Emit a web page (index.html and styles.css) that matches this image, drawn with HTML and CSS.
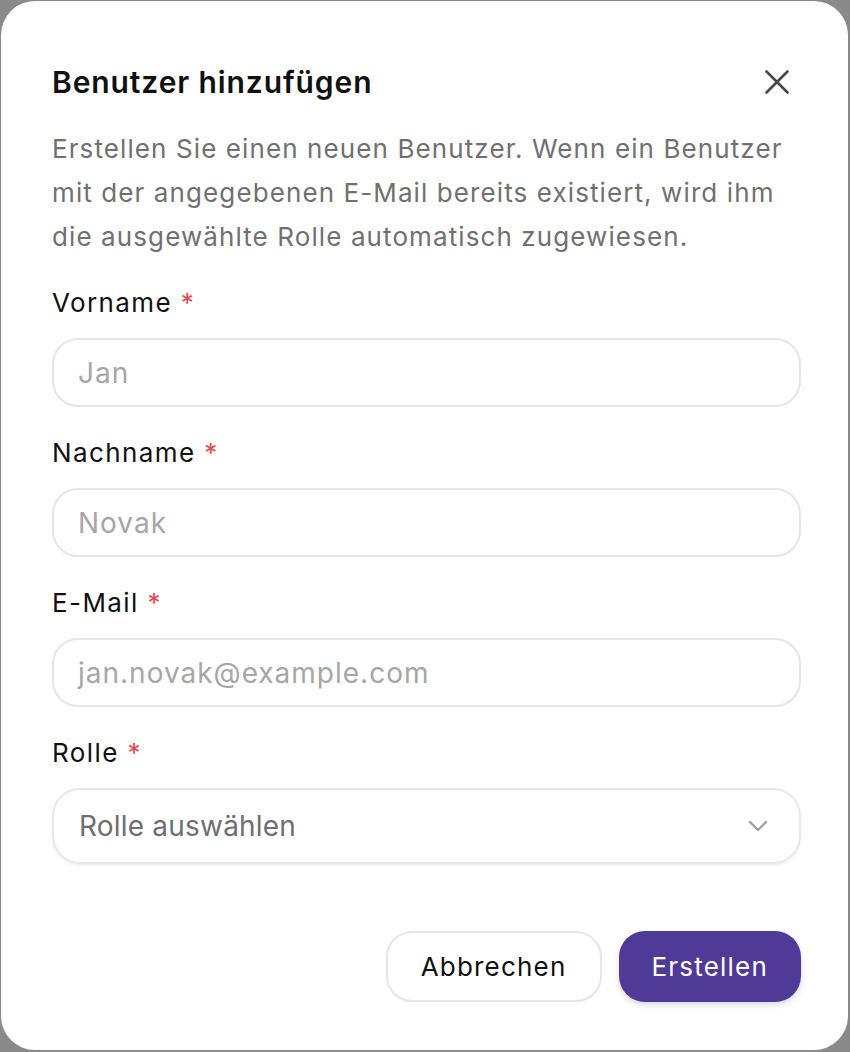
FILE: index.html
```html
<!DOCTYPE html>
<html lang="de">
<head>
<meta charset="utf-8">
<title>Benutzer hinzufügen</title>
<link rel="stylesheet" href="styles.css">
</head>
<body>
<div class="dialog">
  <div class="header">
    <h2 class="title">Benutzer hinzufügen</h2>
    <button class="close" aria-label="Schließen">
      <svg width="24" height="24" viewBox="0 0 24 24" fill="none" stroke="#474747" stroke-width="2.6" stroke-linecap="round"><path d="M1.5 1.5L22.5 22.5M22.5 1.5L1.5 22.5"/></svg>
    </button>
  </div>
  <p class="desc">Erstellen Sie einen neuen Benutzer. Wenn ein Benutzer mit der angegebenen E-Mail bereits existiert, wird ihm die ausgewählte Rolle automatisch zugewiesen.</p>
  <div class="fields">
    <div class="field">
      <label class="label">Vorname <span class="req">*</span></label>
      <div class="input"><span class="ph">Jan</span></div>
    </div>
    <div class="field">
      <label class="label">Nachname <span class="req">*</span></label>
      <div class="input"><span class="ph">Novak</span></div>
    </div>
    <div class="field">
      <label class="label">E-Mail <span class="req">*</span></label>
      <div class="input"><span class="ph">jan.novak@example.com</span></div>
    </div>
    <div class="field">
      <label class="label">Rolle <span class="req">*</span></label>
      <div class="select"><span class="sel-ph">Rolle auswählen</span>
        <svg width="20" height="12" viewBox="0 0 20 12" fill="none" stroke="#9c9c9c" stroke-width="2.2" stroke-linecap="round" stroke-linejoin="round"><path d="M2 2l8 8 8-8"/></svg>
      </div>
    </div>
  </div>
  <div class="actions">
    <button class="btn btn-outline">Abbrechen</button>
    <button class="btn btn-primary">Erstellen</button>
  </div>
</div>
</body>
</html>
```
FILE: styles.css
```css
html, body {
  margin: 0;
  padding: 0;
  background: #8a8a8a;
}
body {
  width: 850px;
  height: 1052px;
  font-family: Inter, "Noto Sans", sans-serif;
  overflow: hidden;
}
.dialog {
  box-sizing: border-box;
  margin: 1px 2px 2px 1px;
  width: 847px;
  height: 1049px;
  background: #fff;
  border-radius: 34px;
  padding: 63px 47px 48px 51px;
  display: flex;
  flex-direction: column;
}
.header {
  display: flex;
  align-items: center;
  justify-content: space-between;
  height: 36px;
}
.title {
  margin: 0;
  font-size: 30px;
  line-height: 36px;
  font-weight: 600;
  color: #111;
  letter-spacing: 0.9px;
}
.close {
  border: 0;
  background: none;
  padding: 0;
  width: 24px;
  height: 24px;
  margin-right: 12px;
  display: flex;
}
.desc {
  margin: 27px 0 0;
  font-size: 26px;
  line-height: 44px;
  color: #707070;
  letter-spacing: 1.1px;
}
.fields {
  margin-top: 26px;
  display: flex;
  flex-direction: column;
  gap: 28px;
}
.field {
  display: flex;
  flex-direction: column;
  gap: 17px;
}
.label {
  font-size: 26px;
  line-height: 36px;
  font-weight: 400;
  color: #111;
  letter-spacing: 1.4px;
}
.req {
  color: #e5484d;
}
.input {
  box-sizing: border-box;
  height: 69px;
  border: 2px solid #e6e6e6;
  border-radius: 26px;
  padding: 0 24px;
  display: flex;
  align-items: center;
}
.ph {
  font-size: 28px;
  color: #a6a6a6;
  letter-spacing: 1px;
}
.select {
  box-sizing: border-box;
  height: 76px;
  border: 2px solid #e8e8e8;
  border-radius: 28px;
  padding: 0 31px 0 25px;
  display: flex;
  align-items: center;
  justify-content: space-between;
  box-shadow: 0 2px 3px rgba(0,0,0,0.06);
}
.sel-ph {
  font-size: 28px;
  color: #6f6f6f;
  letter-spacing: 0.2px;
}
.actions {
  margin-top: auto;
  display: flex;
  justify-content: flex-end;
  gap: 17px;
}
.btn {
  box-sizing: border-box;
  height: 71px;
  border-radius: 26px;
  font-family: Inter, "Noto Sans", sans-serif;
  font-size: 26px;
  font-weight: 400;
  letter-spacing: 1.2px;
  padding: 0 33px;
  cursor: pointer;
}
.btn-outline {
  background: #fff;
  border: 2px solid #e6e6e6;
  color: #111;
}
.btn-primary {
  background: #4f3a97;
  border: 0;
  color: #fff;
  box-shadow: 0 3px 6px rgba(79,58,151,0.2);
}
```
